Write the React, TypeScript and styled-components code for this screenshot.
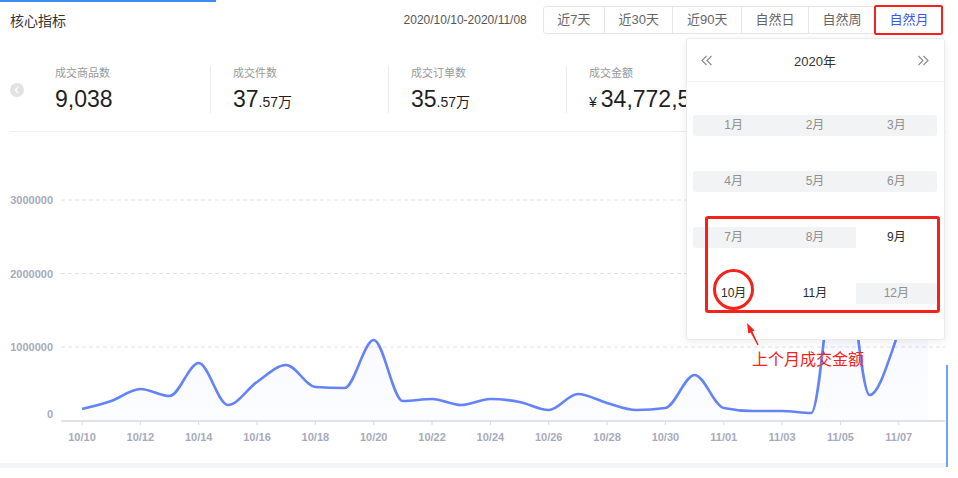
import React from 'react'
import styled, { createGlobalStyle } from 'styled-components'

const GlobalStyle = createGlobalStyle`
  html, body {
    margin: 0;
    padding: 0;
    background: #fff;
  }
  body {
    font-family: "Liberation Sans", "Noto Sans CJK SC", sans-serif;
  }
  * {
    box-sizing: border-box;
  }
`

const RED = '#f5221b'

const tabs = ['近7天', '近30天', '近90天', '自然日', '自然周', '自然月']

const stats = [
  { label: '成交商品数', main: '9,038' },
  { label: '成交件数', main: '37', small: '.57万' },
  { label: '成交订单数', main: '35', small: '.57万' },
  { label: '成交金额', main: '34,772,568', currency: '¥' },
]

// daily values 10/10 .. 11/08
const values = [
  156000, 265000, 429000, 333000, 782000, 211000, 524000, 755000, 456000, 442000,
  1095000, 265000, 293000, 211000, 293000, 252000, 143000, 361000, 238000, 143000,
  170000, 619000, 170000, 129000, 129000, 102000, 2592000, 347000, 1204000, 2456000,
]

const months = [1, 2, 3, 4, 5, 6, 7, 8, 9, 10, 11, 12]
const enabledMonths = [9, 10, 11]

const X0 = 82
const DX = 29.17
const ZERO = 288.5
const PER_M = 73.5
const CHART_W = 946
const CHART_H = 331

function dayLabel(i: number) {
  if (i < 22) return `10/${10 + i}`
  const d = i - 21
  return `11/${d < 10 ? '0' + d : d}`
}

function monotonePath(pts: [number, number][]) {
  const n = pts.length
  const s: number[] = []
  for (let i = 0; i < n - 1; i++) {
    s.push((pts[i + 1][1] - pts[i][1]) / (pts[i + 1][0] - pts[i][0]))
  }
  const t: number[] = new Array(n).fill(0)
  for (let i = 1; i < n - 1; i++) {
    const a = s[i - 1]
    const b = s[i]
    const p = (a + b) / 2
    t[i] = (Math.sign(a) + Math.sign(b)) * Math.min(Math.abs(a), Math.abs(b), 0.5 * Math.abs(p)) || 0
  }
  t[0] = (3 * s[0] - t[1]) / 2
  t[n - 1] = (3 * s[n - 2] - t[n - 2]) / 2
  let d = `M${pts[0][0]},${pts[0][1]}`
  for (let i = 0; i < n - 1; i++) {
    const [x0, y0] = pts[i]
    const [x1, y1] = pts[i + 1]
    const h = (x1 - x0) / 3
    d += ` C${x0 + h},${y0 + h * t[i]} ${x1 - h},${y1 - h * t[i + 1]} ${x1},${y1}`
  }
  return d
}

function TrendChart() {
  const pts = values.map((v, i) => [X0 + i * DX, ZERO - (v / 1e6) * PER_M] as [number, number])
  const line = monotonePath(pts)
  const area = `${line} L${pts[pts.length - 1][0]},${ZERO} L${pts[0][0]},${ZERO} Z`
  const grid = [1, 2, 3]

  return (
    <ChartSvg width={CHART_W} height={CHART_H} viewBox={`0 0 ${CHART_W} ${CHART_H}`}>
      <defs>
        <linearGradient id="areaFill" x1="0" y1="0" x2="0" y2="1">
          <stop offset="0" stopColor="#6a86fa" stopOpacity="0.07" />
          <stop offset="1" stopColor="#6a86fa" stopOpacity="0.02" />
        </linearGradient>
      </defs>
      {grid.map((k) => (
        <line
          key={k}
          x1={61}
          x2={945}
          y1={ZERO - k * PER_M}
          y2={ZERO - k * PER_M}
          stroke="#dfe2ea"
          strokeDasharray="4 3"
        />
      ))}
      {grid.map((k) => (
        <text key={'y' + k} x={53} y={ZERO - k * PER_M + 4} textAnchor="end" className="axis">
          {k * 1000000}
        </text>
      ))}
      <text x={53} y={286} textAnchor="end" className="axis">0</text>
      <path d={area} fill="url(#areaFill)" />
      <line x1={61} x2={945} y1={289} y2={289} stroke="#d6d9e1" strokeWidth={1.5} />
      {values.map((_, i) =>
        i % 2 === 0 ? (
          <g key={'x' + i}>
            <line x1={X0 + i * DX} x2={X0 + i * DX} y1={289} y2={293} stroke="#d6d9e1" />
            <text x={X0 + i * DX} y={309} textAnchor="middle" className="axis">
              {dayLabel(i)}
            </text>
          </g>
        ) : null
      )}
      <path d={line} fill="none" stroke="#6483f8" strokeWidth={2.6} strokeLinejoin="round" />
    </ChartSvg>
  )
}

function DoubleChevron({ dir }: { dir: 'left' | 'right' }) {
  const d =
    dir === 'left'
      ? 'M6.5 1 L2 5.5 L6.5 10 M11.5 1 L7 5.5 L11.5 10'
      : 'M1.5 1 L6 5.5 L1.5 10 M6.5 1 L11 5.5 L6.5 10'
  return (
    <svg width="13" height="11" viewBox="0 0 13 11">
      <path d={d} fill="none" stroke="#8a8a8a" strokeWidth="1.1" />
    </svg>
  )
}

export default function App() {
  return (
    <Page>
      <GlobalStyle />
      <TopAccent />
      <Layout>
        <Panel>
          <Header>
            <Title>核心指标</Title>
            <DateRange>2020/10/10-2020/11/08</DateRange>
            <TabGroup>
              {tabs.map((t, i) => (
                <Tab key={t} $active={i === tabs.length - 1} $first={i === 0}>
                  {t}
                </Tab>
              ))}
            </TabGroup>
          </Header>

          <StatsRow>
            <PrevButton>
              <svg width="6" height="8" viewBox="0 0 6 8">
                <path d="M4.2 1 L1.5 4 L4.2 7" fill="none" stroke="#fff" strokeWidth="1.3" />
              </svg>
            </PrevButton>
            {stats.map((s, i) => (
              <Stat key={s.label} $last={i === stats.length - 1}>
                <StatLabel>{s.label}</StatLabel>
                <StatValue>
                  {s.currency && <Currency>{s.currency}</Currency>}
                  {s.main}
                  {s.small && <Small>{s.small}</Small>}
                </StatValue>
              </Stat>
            ))}
          </StatsRow>

          <TrendChart />
          <BottomBand />

          <Popup>
            <PopHeader>
              <DoubleChevron dir="left" />
              <YearTitle>2020年</YearTitle>
              <DoubleChevron dir="right" />
            </PopHeader>
            <MonthGrid>
              {months.map((m, i) => (
                <MonthCell key={m} $disabled={!enabledMonths.includes(m)} $col={i % 3}>
                  {m}月
                </MonthCell>
              ))}
            </MonthGrid>
            <RangeMark />
            <MonthCircle />
          </Popup>

          <CalloutArrow width="18" height="28" viewBox="0 0 18 28">
            <polygon
              points="3,3 10.6,10.4 8.4,11.5 14.6,24.7 13.4,25.3 6.6,12.4 4.3,13.5"
              fill={RED}
            />
          </CalloutArrow>
          <CalloutText>上个月成交金额</CalloutText>
        </Panel>
        <Rail />
      </Layout>
    </Page>
  )
}

const Page = styled.div`
  width: 958px;
  height: 478px;
  overflow: hidden;
  background: #fff;
`

const TopAccent = styled.div`
  width: 216px;
  height: 2px;
  background: #3e8bf3;
`

const Layout = styled.div`
  display: flex;
  align-items: flex-end;
`

const Panel = styled.div`
  position: relative;
  width: 946px;
  flex: 0 0 946px;
`

const Rail = styled.div`
  width: 2px;
  height: 102px;
  margin-bottom: 1px;
  background: #6fa3f7;
`

const Header = styled.div`
  display: flex;
  align-items: center;
  height: 36px;
  padding: 0 3px 0 10px;
`

const Title = styled.div`
  font-size: 14px;
  color: #333;
`

const DateRange = styled.div`
  margin-left: auto;
  margin-right: 16px;
  font-size: 12px;
  color: #555;
`

const TabGroup = styled.div`
  display: flex;
  height: 28px;
  border: 1px solid #e6e6e6;
  border-radius: 3px;
`

const Tab = styled.div<{ $active?: boolean; $first?: boolean }>`
  position: relative;
  padding: 0 13.5px;
  font-size: 13px;
  line-height: 26px;
  color: ${(p) => (p.$active ? '#3b55f6' : '#666')};
  border-left: ${(p) => (p.$first ? 'none' : '1px solid #e6e6e6')};

  ${(p) =>
    p.$active &&
    `
    &::after {
      content: '';
      position: absolute;
      inset: -2px -1px -2px -2px;
      border: 2px solid ${RED};
      border-radius: 2px;
    }
  `}
`

const StatsRow = styled.div`
  display: flex;
  align-items: center;
  margin-left: 10px;
  padding: 28px 0 18px;
  border-bottom: 1px solid #eceef2;
`

const PrevButton = styled.div`
  display: flex;
  align-items: center;
  justify-content: center;
  width: 14px;
  height: 14px;
  margin-right: 9px;
  border-radius: 50%;
  background: #e2e2e2;
`

const Stat = styled.div<{ $last?: boolean }>`
  flex: 0 0 178px;
  height: 47px;
  padding-left: 22px;
  border-right: ${(p) => (p.$last ? 'none' : '1px solid #ececec')};
  white-space: nowrap;
`

const StatLabel = styled.div`
  font-size: 11px;
  line-height: 14px;
  color: #999;
`

const StatValue = styled.div`
  margin-top: 5px;
  font-size: 23px;
  line-height: 28px;
  color: #1f1f1f;
`

const Small = styled.span`
  font-size: 14px;
`

const Currency = styled.span`
  font-size: 14px;
  margin-right: 4px;
`

const ChartSvg = styled.svg`
  display: block;

  .axis {
    font-family: "Liberation Sans", sans-serif;
    font-size: 11px;
    font-weight: bold;
    fill: #a6abbb;
  }
`

const BottomBand = styled.div`
  height: 5px;
  background: #f3f4f8;
`

const Popup = styled.div`
  position: absolute;
  left: 686px;
  top: 36px;
  width: 259px;
  height: 302px;
  background: #fff;
  border: 1px solid #ebebeb;
  border-radius: 3px;
  box-shadow: 0 2px 8px rgba(0, 0, 0, 0.08);
  z-index: 2;
`

const PopHeader = styled.div`
  display: flex;
  align-items: center;
  justify-content: space-between;
  height: 43px;
  padding: 0 14px 0 13px;
  border-bottom: 1px solid #f0f0f0;
`

const YearTitle = styled.div`
  font-size: 13px;
  color: #333;
`

const MonthGrid = styled.div`
  display: grid;
  grid-template-columns: repeat(3, 1fr);
  grid-auto-rows: 21px;
  row-gap: 35px;
  padding: 33px 7px 0 6px;
`

const MonthCell = styled.div<{ $disabled?: boolean; $col: number }>`
  text-align: center;
  font-size: 12px;
  line-height: 21px;
  color: ${(p) => (p.$disabled ? '#8f8f8f' : '#2a2a2a')};
  background: ${(p) => (p.$disabled ? '#f2f3f5' : 'transparent')};
  border-radius: ${(p) => (p.$col === 0 ? '3px 0 0 3px' : p.$col === 2 ? '0 3px 3px 0' : '0')};
`

const RangeMark = styled.div`
  position: absolute;
  left: 18px;
  top: 177px;
  width: 235px;
  height: 97px;
  border: 3px solid ${RED};
  border-radius: 3px;
  pointer-events: none;
`

const MonthCircle = styled.div`
  position: absolute;
  left: 26px;
  top: 230px;
  width: 41px;
  height: 41px;
  border: 3px solid ${RED};
  border-radius: 50%;
  pointer-events: none;
`

const CalloutArrow = styled.svg`
  position: absolute;
  left: 744px;
  top: 318px;
  z-index: 3;
`

const CalloutText = styled.div`
  position: absolute;
  left: 752px;
  top: 349px;
  font-size: 16px;
  line-height: 18px;
  color: ${RED};
  white-space: nowrap;
  z-index: 3;
`
